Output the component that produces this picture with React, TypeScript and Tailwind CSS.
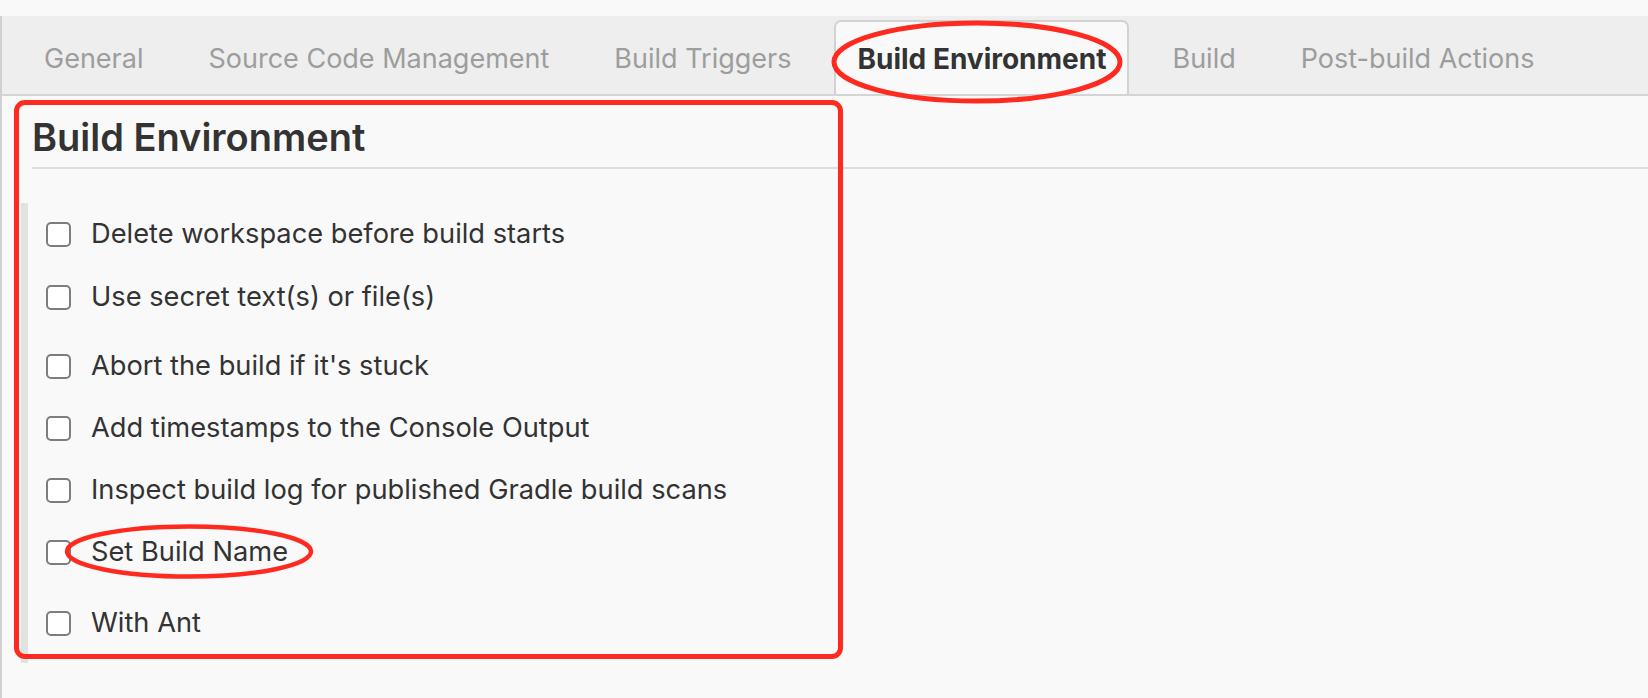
import React from "react";

const tabs = [
  { name: "General", active: false },
  { name: "Source Code Management", active: false },
  { name: "Build Triggers", active: false },
  { name: "Build Environment", active: true },
  { name: "Build", active: false },
  { name: "Post-build Actions", active: false },
];

// extra top margin per row, the rows in the reference are not evenly spaced
const options = [
  { label: "Delete workspace before build starts", mt: "mt-0" },
  { label: "Use secret text(s) or file(s)", mt: "mt-[1px]" },
  { label: "Abort the build if it's stuck", mt: "mt-[7px]" },
  { label: "Add timestamps to the Console Output", mt: "mt-0" },
  { label: "Inspect build log for published Gradle build scans", mt: "mt-0" },
  { label: "Set Build Name", mt: "mt-0" },
  { label: "With Ant", mt: "mt-[9px]" },
];

const Checkbox = () => (
  <span className="block w-[25px] h-[25px] shrink-0 rounded-[5px] border-2 border-[#7d7d7d] bg-white" />
);

const App = () => {
  return (
    <div className="relative min-h-[698px] bg-[#f9f9f9] pt-[16px] font-['Inter','Noto_Sans',sans-serif] text-[#333333] overflow-hidden">
      <div className="min-h-[682px] border-l-2 border-[#d0d0d0]">
        {/* Tab bar */}
        <div className="h-[80px] bg-[#eeeeee] border-b-2 border-[#d4d4d4] flex items-end pl-[20px] gap-[21px]">
          {tabs.map((tab) =>
            tab.active ? (
              <div
                key={tab.name}
                className="h-[74px] px-[21px] pt-[20px] bg-[#f9f9f9] border-2 border-b-0 border-[#d2d2d2] rounded-t-[7px] text-[28px] leading-[34px] font-bold text-[#333333] whitespace-nowrap"
              >
                {tab.name}
              </div>
            ) : (
              <div
                key={tab.name}
                className="h-[74px] px-[22px] pt-[22px] text-[27px] leading-[34px] text-[#9d9d9d] whitespace-nowrap"
              >
                {tab.name}
              </div>
            )
          )}
        </div>

        {/* Section */}
        <div className="pl-[19px] pt-[18px]">
          <div className="ml-[11px] pb-[7px] border-b-2 border-[#dddddd]">
            <h2 className="text-[38px] leading-[46px] font-semibold text-[#333333]">
              Build Environment
            </h2>
          </div>
          <div className="mt-[34px] w-[800px] border-l-[7px] border-[#e2e2e2] pl-[18px] pb-[9px]">
            {options.map((opt) => (
              <div
                key={opt.label}
                className={`h-[62px] flex items-center gap-[20px] ${opt.mt}`}
              >
                <Checkbox />
                <span className="text-[27.25px] leading-[34px] text-[#333333] whitespace-nowrap">
                  {opt.label}
                </span>
              </div>
            ))}
          </div>
        </div>
      </div>

      {/* Red annotations */}
      <div className="absolute left-[14px] top-[100px] w-[829px] h-[559px] border-[5px] border-[#ff2a1f] rounded-[11px] pointer-events-none" />
      <svg
        className="absolute left-0 top-0 pointer-events-none"
        width="1648"
        height="698"
        viewBox="0 0 1648 698"
      >
        <ellipse cx="977" cy="62" rx="143" ry="39" fill="none" stroke="#ff2a1f" strokeWidth="5" />
        <ellipse cx="189" cy="551.5" rx="122" ry="25" fill="none" stroke="#ff2a1f" strokeWidth="4.5" />
      </svg>
    </div>
  );
};

export default App;
